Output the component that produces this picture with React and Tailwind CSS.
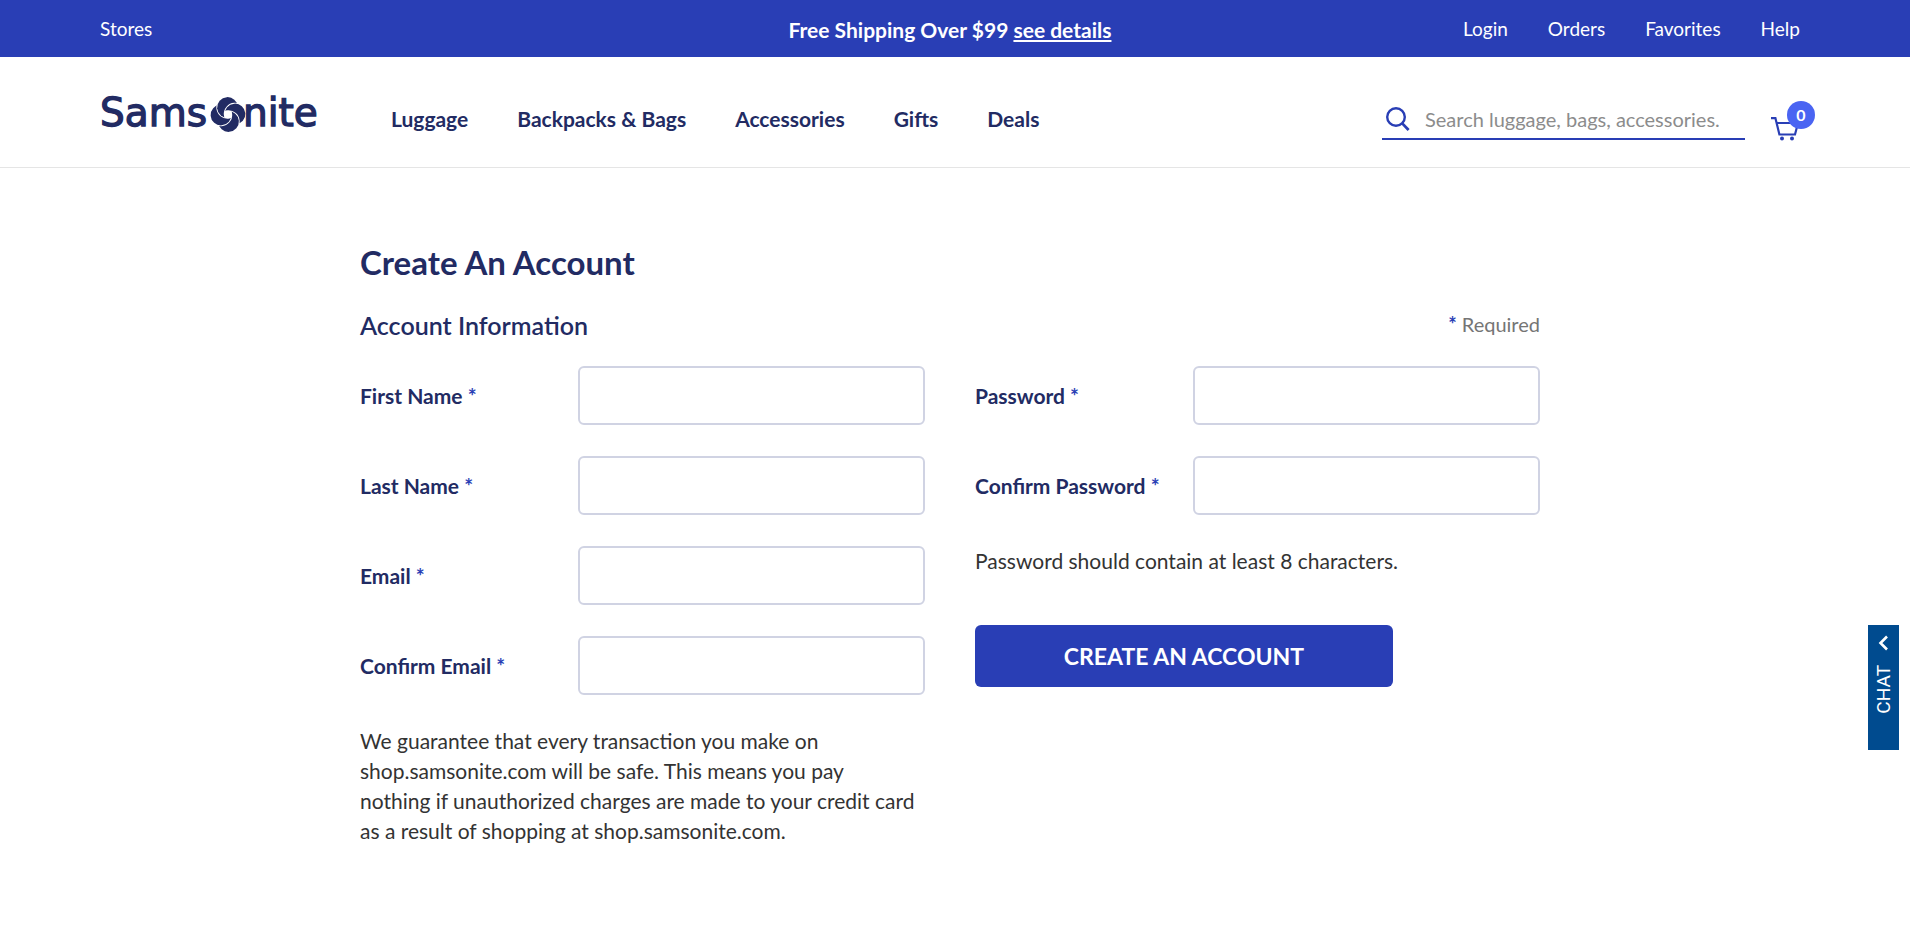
const accountLinks = ["Login", "Orders", "Favorites", "Help"];
const categories = ["Luggage", "Backpacks & Bags", "Accessories", "Gifts", "Deals"];

function Logo() {
  return (
    <svg viewBox="0 -10 220 52" className="h-[52px] w-[220px]" role="img" aria-label="Samsonite">
      <defs>
        <mask id="blade" maskUnits="userSpaceOnUse" x="-20" y="-20" width="40" height="40">
          <rect x="-20" y="-20" width="40" height="40" fill="white" />
          <circle cx="7" cy="0" r="11.2" fill="black" />
        </mask>
      </defs>
      <g
        fill="#222b63"
        stroke="#222b63"
        strokeWidth="1.3"
        fontFamily="'DejaVu Sans', sans-serif"
        fontSize="39"
      >
        <text x="0" y="29">Sams</text>
        <text x="143" y="29">nite</text>
      </g>
      <g transform="translate(128 17.5) rotate(-4)" fill="#222b63">
        {[0, 90, 180, 270].map((angle) => (
          <g key={angle} transform={`rotate(${angle})`}>
            <circle cx="0" cy="-7" r="10.4" mask="url(#blade)" />
          </g>
        ))}
      </g>
    </svg>
  );
}

function SearchIcon() {
  return (
    <svg viewBox="0 0 24 24" className="size-6" fill="none" stroke="#293eb5" strokeWidth="2.4" aria-hidden="true">
      <circle cx="10" cy="10" r="8.8" />
      <path d="M16.2 16.4 22.6 23" strokeWidth="2.8" />
    </svg>
  );
}

function CartIcon() {
  return (
    <svg viewBox="0 0 28 24" className="h-6 w-7" fill="none" stroke="#293eb5" strokeWidth="2.2" aria-hidden="true">
      <path d="M0 1.1h4.4l4 16.4H24L27 6H5.6" />
      <circle cx="11" cy="21.6" r="2" fill="#293eb5" stroke="none" />
      <circle cx="21" cy="21.6" r="2" fill="#293eb5" stroke="none" />
    </svg>
  );
}

function Field({ id, label, type = "text" }) {
  return (
    <div className="flex items-center">
      <label htmlFor={id} className="w-[218px] shrink-0 text-[21px] leading-[30px] font-bold text-[#222b63]">
        {label} <span className="text-[#293eb5]">*</span>
      </label>
      <input
        id={id}
        type={type}
        required
        className="h-[59px] min-w-0 flex-1 rounded-md border-2 border-[#d0d3e3] bg-white px-4 text-xl outline-none focus:border-[#293eb5]"
      />
    </div>
  );
}

export default function App() {
  return (
    <div className="bg-white pr-[10px] font-['Lato',sans-serif] text-[#333333]">
      <div className="grid h-[57px] grid-cols-[1fr_auto_1fr] items-center bg-[#293eb5] pt-0.5 pr-[110px] pl-[100px] text-white">
        <a href="#stores" className="text-[19px]">Stores</a>
        <p className="text-[21px] leading-7 font-bold">
          Free Shipping Over $99{" "}
          <a href="#details" className="underline underline-offset-2">see details</a>
        </p>
        <nav aria-label="Account" className="flex justify-end gap-10 text-[19px]">
          {accountLinks.map((link) => (
            <a key={link} href={`#${link.toLowerCase()}`}>{link}</a>
          ))}
        </nav>
      </div>

      <header className="flex items-start border-b border-[#e5e5e5] pt-[30px] pr-[95px] pb-5 pl-[100px]">
        <a href="#home" className="h-[60px]"><Logo /></a>
        <nav aria-label="Categories" className="mt-[18px] ml-[71px] flex gap-[49px] text-[21px] leading-7 font-bold text-[#222b63]">
          {categories.map((category) => (
            <a key={category} href="#category">{category}</a>
          ))}
        </nav>
        <form role="search" className="mt-3 ml-auto flex h-[41px] w-[363px] items-center border-b-2 border-[#293eb5] pl-1">
          <button type="submit" aria-label="Search"><SearchIcon /></button>
          <input
            type="search"
            aria-label="Search"
            placeholder="Search luggage, bags, accessories."
            className="ml-[15px] min-w-0 flex-1 text-xl outline-none placeholder:text-[#8c8c8c]"
          />
        </form>
        <a href="#cart" aria-label="Cart, 0 items" className="relative mt-3.5 ml-[26px] flex h-10 w-11 items-end">
          <CartIcon />
          <span className="absolute top-0 right-0 flex size-7 items-center justify-center rounded-full bg-[#4a64f2] text-base font-bold text-white">
            0
          </span>
        </a>
      </header>

      <main className="pt-[74px] pr-[10px] pb-[90px]">
        <form className="mx-auto max-w-[1180px]">
          <h1 className="text-[33px] leading-10 font-bold text-[#222b63]">Create An Account</h1>
          <div className="mt-7 flex items-start justify-between">
            <h2 className="text-[25px] leading-[30px] font-semibold text-[#222b63]">Account Information</h2>
            <p className="text-xl leading-7 text-[#757575]">
              <span className="font-bold text-[#293eb5]">*</span> Required
            </p>
          </div>
          <div className="mt-[26px] grid grid-cols-2 items-start gap-[50px]">
            <div className="flex flex-col gap-[31px]">
              <Field id="first-name" label="First Name" />
              <Field id="last-name" label="Last Name" />
              <Field id="email" label="Email" type="email" />
              <Field id="confirm-email" label="Confirm Email" type="email" />
              <p className="text-[21px] leading-[30px]">
                We guarantee that every transaction you make on
                <br />
                shop.samsonite.com will be safe. This means you pay
                <br />
                nothing if unauthorized charges are made to your credit card
                <br />
                as a result of shopping at shop.samsonite.com.
              </p>
            </div>
            <div className="flex flex-col gap-[31px]">
              <Field id="password" label="Password" type="password" />
              <Field id="confirm-password" label="Confirm Password" type="password" />
              <p className="text-[21px] leading-[30px]">Password should contain at least 8 characters.</p>
              <button
                type="submit"
                className="mt-[18px] h-[62px] w-[418px] rounded-md bg-[#293eb5] text-[23px] leading-7 font-bold text-white"
              >
                CREATE AN ACCOUNT
              </button>
            </div>
          </div>
        </form>
      </main>

      <button
        type="button"
        className="fixed top-2/3 right-[21px] flex h-[125px] w-[31px] flex-col items-center gap-3.5 bg-[#004b8f] pt-2.5 font-['Roboto',sans-serif] text-[19px] text-white"
      >
        <svg viewBox="0 0 12 16" className="h-4 w-3" fill="none" stroke="currentColor" strokeWidth="2.6" aria-hidden="true">
          <path d="M9 1.5 2.5 8 9 14.5" />
        </svg>
        <span className="rotate-180 leading-6 [writing-mode:vertical-rl]">CHAT</span>
      </button>
    </div>
  );
}
